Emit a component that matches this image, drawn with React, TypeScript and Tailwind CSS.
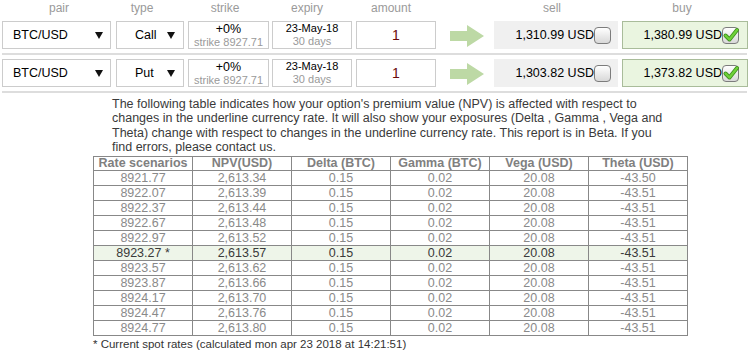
const options = [
  { type: "Call", sell: "1,310.99", buy: "1,380.99" },
  { type: "Put", sell: "1,303.82", buy: "1,373.82" },
];

const scenarios = [
  { rate: "8921.77", npv: "2,613.34", theta: "-43.50" },
  { rate: "8922.07", npv: "2,613.39", theta: "-43.51" },
  { rate: "8922.37", npv: "2,613.44", theta: "-43.51" },
  { rate: "8922.67", npv: "2,613.48", theta: "-43.51" },
  { rate: "8922.97", npv: "2,613.52", theta: "-43.51" },
  { rate: "8923.27 *", npv: "2,613.57", theta: "-43.51", spot: true },
  { rate: "8923.57", npv: "2,613.62", theta: "-43.51" },
  { rate: "8923.87", npv: "2,613.66", theta: "-43.51" },
  { rate: "8924.17", npv: "2,613.70", theta: "-43.51" },
  { rate: "8924.47", npv: "2,613.76", theta: "-43.51" },
  { rate: "8924.77", npv: "2,613.80", theta: "-43.51" },
];

const Caret = () => (
  <svg width="8" height="7" viewBox="0 0 8 7">
    <path d="M0 0 L8 0 L4 7 Z" fill="#111" />
  </svg>
);

const Arrow = () => (
  <svg width="34" height="22" viewBox="0 0 34 22">
    <path d="M0 6 L17 6 L17 0 L34 11 L17 22 L17 16 L0 16 Z" fill="#bdd9a5" />
  </svg>
);

const CheckBox = ({ checked }: { checked: boolean }) => (
  <div className="relative w-[17px] h-[17px] rounded-[4px] border border-[#7c7c7c] bg-linear-to-b from-white to-[#d8d8d8]">
    {checked && (
      <svg className="absolute -left-[1px] -top-[2px]" width="18" height="18" viewBox="0 0 18 18">
        <path d="M3.5 9.5 L7.5 13.5 L15 4" fill="none" stroke="#3d8f1c" strokeWidth="4" strokeLinecap="round" strokeLinejoin="round" />
        <path d="M3.5 9.5 L7.5 13.5 L15 4" fill="none" stroke="#6fd13a" strokeWidth="2.4" strokeLinecap="round" strokeLinejoin="round" />
      </svg>
    )}
  </div>
);

export default function App() {
  return (
    <div className="w-[749px] h-[351px] bg-white overflow-hidden font-['Liberation_Sans',Arial,sans-serif] text-black">
      {/* column labels */}
      <div className="flex pl-[2px] h-[21px] pt-[1px] text-[12px] leading-[14px] text-[#9a9a9a]">
        <div className="w-[109px] text-center pl-[5px]">pair</div>
        <div className="ml-[5px] w-[68px] text-center pr-[16px]">type</div>
        <div className="ml-[4px] w-[81px] text-center pr-[7px]">strike</div>
        <div className="ml-[3px] w-[80px] text-center pr-[10px]">expiry</div>
        <div className="ml-[4px] w-[80px] text-center pr-[10px]">amount</div>
        <div className="w-[58px]" />
        <div className="w-[124px] text-center pr-[8px]">sell</div>
        <div className="ml-[4px] w-[126px] text-center pr-[6px]">buy</div>
      </div>

      {options.map((o, i) => (
        <div key={i}>
          <div className="flex pl-[2px] h-[28px] text-[12.5px]">
            <div className="w-[109px] border border-[#cccccc] flex items-center justify-between pl-[10px] pr-[7px]">
              <span>BTC/USD</span>
              <Caret />
            </div>
            <div className="ml-[5px] w-[68px] border border-[#cccccc] flex items-center justify-between pl-[18px] pr-[8px]">
              <span>{o.type}</span>
              <Caret />
            </div>
            <div className="ml-[4px] w-[81px] border border-[#cccccc] flex flex-col items-center justify-center">
              <span className="leading-[13px]">+0%</span>
              <span className="text-[11px] leading-[12px] text-[#9a9a9a]">strike 8927.71</span>
            </div>
            <div className="ml-[3px] w-[80px] border border-[#cccccc] flex flex-col items-center justify-center text-[11px] leading-[13px]">
              <span>23-May-18</span>
              <span className="text-[#9a9a9a]">30 days</span>
            </div>
            <div className="ml-[4px] w-[80px] border border-[#cccccc] flex items-center justify-center text-[14px] text-[#6a0a0a]">1</div>
            <div className="w-[58px] flex items-center pl-[14px] pt-[2px]">
              <Arrow />
            </div>
            <div className="w-[124px] bg-[#f0f0f0] flex items-center justify-end pr-[7px]">
              <span>{o.sell} USD</span>
              <CheckBox checked={false} />
            </div>
            <div className="ml-[4px] w-[126px] bg-[#eaf5e0] border border-[#a9bc9a] flex items-center justify-end pr-[8px]">
              <span>{o.buy} USD</span>
              <CheckBox checked={true} />
            </div>
          </div>
          <div className="mx-[2px] my-[4px] h-[2px] bg-[#dddddd]" />
        </div>
      ))}

      <div className="ml-[93px] w-[600px]">
        <div className="pl-[19px] text-[12.5px] leading-[14.3px] text-[#3a3a3a]">
          <div>The following table indicates how your option's premium value (NPV) is affected with respect to</div>
          <div>changes in the underline currency rate. It will also show your exposures (Delta , Gamma , Vega and</div>
          <div>Theta) change with respect to changes in the underline currency rate. This report is in Beta. If you</div>
          <div>find errors, please contact us.</div>
        </div>

        <table className="mt-[2px] w-[595px] table-fixed border-collapse text-[12.5px] text-center">
          <thead>
            <tr className="leading-[13px] text-[#808080]">
              <th className="border border-[#888] font-bold p-0">Rate scenarios</th>
              <th className="border border-[#888] font-bold p-0">NPV(USD)</th>
              <th className="border border-[#888] font-bold p-0">Delta (BTC)</th>
              <th className="border border-[#888] font-bold p-0">Gamma (BTC)</th>
              <th className="border border-[#888] font-bold p-0">Vega (USD)</th>
              <th className="border border-[#888] font-bold p-0">Theta (USD)</th>
            </tr>
          </thead>
          <tbody>
            {scenarios.map((s) => (
              <tr key={s.rate} className={s.spot ? "leading-[14px] bg-[#eef5e9] text-[#3a3a3a]" : "leading-[14px] text-[#8a8a8a]"}>
                <td className="border border-[#888] p-0">{s.rate}</td>
                <td className="border border-[#888] p-0">{s.npv}</td>
                <td className="border border-[#888] p-0">0.15</td>
                <td className="border border-[#888] p-0">0.02</td>
                <td className="border border-[#888] p-0">20.08</td>
                <td className="border border-[#888] p-0">{s.theta}</td>
              </tr>
            ))}
          </tbody>
        </table>

        <div className="mt-[1px] text-[11.5px] leading-[14px] text-[#333]">
          * Current spot rates (calculated mon apr 23 2018 at 14:21:51)
        </div>
      </div>
    </div>
  );
}
